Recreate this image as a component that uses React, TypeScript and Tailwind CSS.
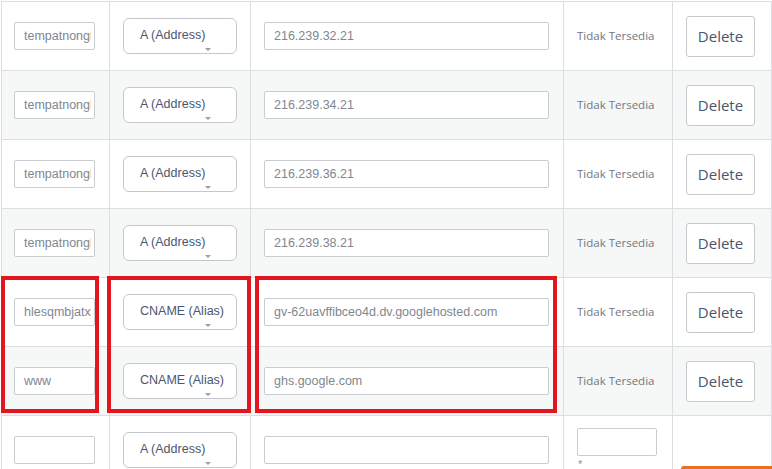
import React from "react";

type Record = {
  host: string;
  type: string;
  value: string;
};

const records: Record[] = [
  { host: "tempatnongkrong", type: "A (Address)", value: "216.239.32.21" },
  { host: "tempatnongkrong", type: "A (Address)", value: "216.239.34.21" },
  { host: "tempatnongkrong", type: "A (Address)", value: "216.239.36.21" },
  { host: "tempatnongkrong", type: "A (Address)", value: "216.239.38.21" },
  { host: "hlesqmbjatxyz", type: "CNAME (Alias)", value: "gv-62uavffibceo4d.dv.googlehosted.com" },
  { host: "www", type: "CNAME (Alias)", value: "ghs.google.com" },
];

const cell = "border-r border-b border-[#dcdfe2] flex items-center";
const inputCls =
  "h-[28px] border border-[#c9cdd1] rounded-[2px] bg-white pl-[9px] pr-[3px] text-[12.5px] text-[#80878f] outline-none font-['Liberation_Sans',Arial,sans-serif]";

const TypeSelect = ({ label }: { label: string }) => (
  <div className="relative w-[114px] h-[36px] border border-[#c4c8cc] rounded-[6px] bg-white flex items-center pl-[16px] text-[12.5px] text-[#4a5670] font-['Liberation_Sans',Arial,sans-serif]">
    <span className="-mt-px">{label}</span>
    <svg className="absolute left-[81px] top-[29px]" width="6" height="3" viewBox="0 0 6 3">
      <path d="M0 0h6L3 3z" fill="#9aa0a6" />
    </svg>
  </div>
);

const Row = ({ rec, index }: { rec: Record; index: number }) => (
  <div
    className={`grid grid-cols-[108px_141px_313px_109px_99px] h-[69px] ${
      index % 2 === 1 ? "bg-[#f6f7f7]" : "bg-white"
    }`}
  >
    <div className={`${cell} pl-3`}>
      <input readOnly value={rec.host} className={`${inputCls} w-[81px]`} />
    </div>
    <div className={`${cell} pl-[13px]`}>
      <TypeSelect label={rec.type} />
    </div>
    <div className={`${cell} pl-[13px]`}>
      <input readOnly value={rec.value} className={`${inputCls} w-[285px]`} />
    </div>
    <div className={`${cell} pl-[13px] text-[11.5px] text-[#6f7780] font-['Open_Sans',sans-serif]`}>
      Tidak Tersedia
    </div>
    <div className={`${cell} pl-[13px]`}>
      <button className="w-[69px] h-[41px] border border-[#c5cad0] rounded-[3px] bg-white text-[15px] text-[#4a5670] font-['Open_Sans',sans-serif]">
        Delete
      </button>
    </div>
  </div>
);

export default function App() {
  return (
    <div className="relative w-[772px] h-[469px] overflow-hidden bg-white">
      <div className="ml-px mt-px border-l border-t border-[#dcdfe2] w-[771px]">
        {records.map((rec, i) => (
          <Row key={i} rec={rec} index={i} />
        ))}
        <div className="grid grid-cols-[108px_141px_313px_109px_99px] h-[69px] bg-white">
          <div className={`${cell} pl-3`}>
            <input readOnly value="" className={`${inputCls} w-[81px]`} />
          </div>
          <div className={`${cell} pl-[13px]`}>
            <TypeSelect label="A (Address)" />
          </div>
          <div className={`${cell} pl-[13px]`}>
            <input readOnly value="" className={`${inputCls} w-[285px]`} />
          </div>
          <div className={`${cell} pl-[13px]`}>
            <div className="flex flex-col -mt-[4px]">
              <input readOnly value="" className={`${inputCls} w-[80px]`} />
              <span className="mt-[3px] text-[11px] leading-[10px] text-[#8a9099] pl-[1px] font-['Liberation_Sans',Arial,sans-serif]">
                *
              </span>
            </div>
          </div>
          <div className={cell}></div>
        </div>
      </div>

      {/* highlight boxes */}
      <div className="absolute left-[1px] top-[276px] w-[98px] h-[137px] border-4 border-[#e3161f]" />
      <div className="absolute left-[107px] top-[276px] w-[144px] h-[137px] border-4 border-[#e3161f]" />
      <div className="absolute left-[255px] top-[276px] w-[302px] h-[137px] border-4 border-[#e3161f]" />

      <div className="absolute right-0 bottom-0 w-[91px] h-[3px] rounded-tl-[3px] bg-[#e8701e]" />
    </div>
  );
}
